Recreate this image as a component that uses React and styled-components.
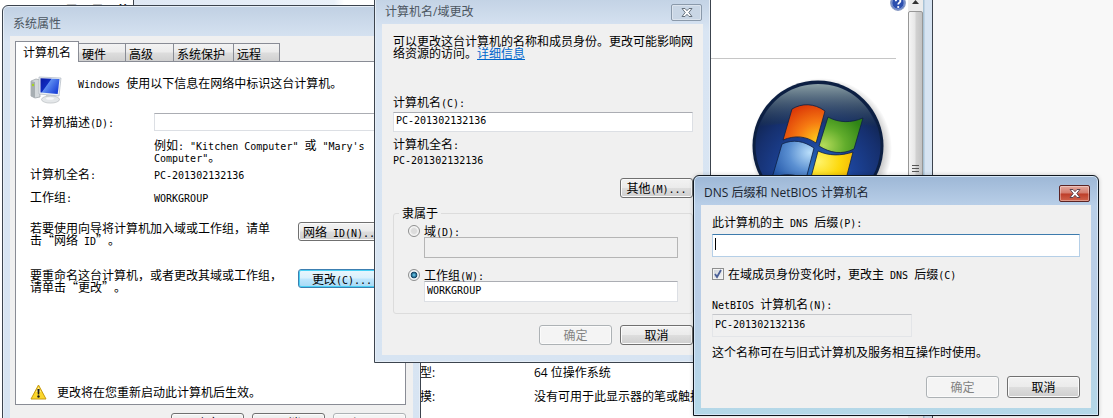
import React from "react";
import styled, { createGlobalStyle, css } from "styled-components";

const Global = createGlobalStyle`
  *{ box-sizing: border-box; }
  body{
    margin: 0;
    background: #f8f8f8;
  }
`;

const Desktop = styled.main`
  position: relative;
  min-height: 100vh;
  overflow: hidden;
  font: 12px/12px "Noto Sans CJK SC", sans-serif;
  text-spacing-trim: space-all;
  color: #000;
`;

const Latin = styled.span`
  font-family: "DejaVu Sans Mono", "Noto Sans CJK SC", monospace;
  font-size: 10px;
  line-height: 0;
  white-space: pre-wrap;
`;

/* latin runs take half of a chinese character's width */
function Song({ children }) {
    return children.split(/([\x20-\x7e]+)/).map((part, i) => (
        i % 2 ? <Latin key={i}>{part}</Latin> : part
    ));
}

const Window = styled.section`
  position: absolute;
  left: ${(p) => p.$x}px;
  top: ${(p) => p.$y}px;
  width: ${(p) => p.$w}px;
  padding: 0 7px 7px;
  border: 1px solid #3c444e;
  border-radius: 6px 6px 0 0;
  background: linear-gradient(#c0d0e3, #d9e5f3 36px, #d7e4f2);
  box-shadow: inset 0 0 0 1px #e6eef7;
  ${(p) => p.$active && css`
    border-color: #10171f;
    background: linear-gradient(#9db7d6, #b9cfe8 30px, #b9cde6 55%, #b4d8e8);
    box-shadow: inset 0 0 0 1px #d5e6f6, 0 0 4px rgba(0, 0, 0, 0.2);
  `}
`;

const TitleBar = styled.header`
  display: flex;
  align-items: center;
  justify-content: space-between;
  height: ${(p) => p.$h}px;
  padding: 5px 1px 0 3px;
`;

const Title = styled.h1`
  margin: 0;
  font: 12px/16px "Open Sans", "Noto Sans CJK SC", sans-serif;
  color: ${(p) => (p.$active ? "#1a2430" : "#4c5661")};
`;

const Close = styled.button`
  display: flex;
  align-items: center;
  justify-content: center;
  width: 31px;
  height: 17px;
  padding: 0;
  border: 1px solid ${(p) => (p.$active ? "#5b2424" : "#8a99aa")};
  border-radius: 2px;
  background: ${(p) => (p.$active ? "linear-gradient(#e3a79c, #d37a6b 48%, #bd3d28 52%, #d0634c)" : "#c9d6e5")};
  box-shadow: inset 0 0 0 1px rgba(255, 255, 255, 0.35);
`;

const Client = styled.div`
  display: flex;
  flex-direction: column;
  padding: ${(p) => p.$pad};
  background: #f0f0f0;
`;

const Line = styled.p`
  margin: ${(p) => p.$top || 0}px 0 0;
  line-height: 12px;
`;

const Label = styled.label`
  display: block;
  margin-top: ${(p) => p.$top || 0}px;
  line-height: 12px;
`;

const Field = styled.input`
  display: block;
  width: ${(p) => p.$w || "100%"};
  height: ${(p) => p.$h || 20}px;
  margin-top: 4px;
  padding: 0 2px 3px;
  border: 1px solid #dcdfe4;
  border-top-color: #abadb3;
  border-radius: 0;
  background: #fff;
  color: #000;
  font: 10px/12px "DejaVu Sans Mono", monospace;
  outline: none;
  &:disabled, &:read-only{
    border-color: #b5b5b5;
    background: #f0f0f0;
  }
  &:read-only:not(:disabled){
    border-color: #c4c6ca #e3e5e8 #e3e5e8;
  }
`;

const FocusField = styled.div`
  display: flex;
  align-items: flex-start;
  height: 23px;
  margin-top: 6px;
  padding: 3px 2px;
  border: 1px solid #b5cfe7;
  border-top-color: #3d7bad;
  background: #fff;
  input{
    flex: 1;
    order: 1;
    min-width: 0;
    height: 13px;
    padding: 0;
    border: 0;
    outline: none;
    background: transparent;
    font: 10px/12px "DejaVu Sans Mono", monospace;
  }
`;

const Caret = styled.span`
  width: 1px;
  height: 12px;
  background: #000;
`;

const Button = styled.button`
  width: ${(p) => p.$w || 73}px;
  height: ${(p) => p.$h || 20}px;
  padding: 0;
  border: 1px solid #707070;
  border-radius: 3px;
  background: linear-gradient(#f2f2f2, #ebebeb 48%, #dddddd 52%, #cfcfcf);
  box-shadow: inset 0 0 0 1px #fbfbfb;
  color: #000;
  font: 12px/12px "Noto Sans CJK SC", sans-serif;
  white-space: nowrap;
  ${(p) => p.$hot && css`
    border-color: #3c7fb1;
    background: linear-gradient(#e9f6fd, #d9f0fc 48%, #bee6fd 52%, #a7d9f5);
    box-shadow: inset 0 0 0 1px #48d0f4;
  `}
  &:disabled{
    border-color: #adb2b5;
    background: #f4f4f4;
    color: #838383;
  }
`;

const Buttons = styled.div`
  display: flex;
  justify-content: flex-end;
  gap: 8px;
  margin-top: ${(p) => p.$top}px;
`;

const Tabs = styled.nav`
  display: flex;
  align-items: flex-end;
  height: 20px;
`;

const Tab = styled.button`
  height: 18px;
  padding: 2px 3px 0;
  width: ${(p) => p.$w}px;
  border: 1px solid #898c95;
  border-width: 1px 1px 0 0;
  background: linear-gradient(#f3f3f3, #ebebeb 48%, #dddddd 52%, #d0d0d0);
  color: #000;
  font: 12px/12px "Noto Sans CJK SC", sans-serif;
  text-align: left;
  white-space: nowrap;
  &[aria-selected="true"]{
    height: 21px;
    margin-bottom: -1px;
    padding: 0 7px;
    border-left-width: 1px;
    background: #fff;
    z-index: 1;
  }
`;

const Panel = styled.div`
  display: flex;
  flex-direction: column;
  height: 344px;
  padding: 14px 14px 4px;
  border: 1px solid #898c95;
  background: #fff;
`;

const Intro = styled.div`
  display: flex;
  gap: 16px;
  p{ margin: 1px 0 0; }
`;

const Facts = styled.div`
  display: grid;
  grid-template-columns: 124px 1fr;
  grid-template-rows: 18px 37px 23px 12px;
  align-items: start;
  margin-top: 9px;
  input{ margin: 0; }
  label{ margin-top: 3px; }
  p{ margin: 0; }
`;

const Hint = styled.div`
  width: 220px;
  padding-top: 8px;
`;

const Action = styled.div`
  display: flex;
  justify-content: space-between;
  align-items: flex-start;
  height: 24px;
  margin-top: ${(p) => p.$top}px;
  padding-right: 5px;
`;

const Notice = styled.div`
  display: flex;
  align-items: center;
  gap: 10px;
  margin-top: auto;
`;

const Link = styled.a`
  color: #0066cc;
  text-decoration: underline;
`;

const Group = styled.fieldset`
  min-width: 0;
  margin: 9px 0 0;
  padding: 5px 14px 11px;
  border: 1px solid #dcdcdc;
  border-radius: 3px;
  legend{
    padding: 0 3px;
    margin-left: -9px;
    line-height: 12px;
  }
  > input{ margin: 0 0 0 16px; }
`;

const Choice = styled.div`
  display: flex;
  align-items: center;
  gap: 4px;
  height: 13px;
  margin-top: ${(p) => p.$top || 0}px;
`;

const Radio = styled.input`
  appearance: none;
  width: 12px;
  height: 12px;
  margin: 0;
  border: 1px solid #8e8f8f;
  border-radius: 50%;
  background: radial-gradient(#dcdcdc 35%, #f6f6f6 60%);
  &:checked{
    background: radial-gradient(#56b4d8 10%, #124364 42%, #eef2f4 52%);
  }
`;

const Check = styled.span`
  display: grid;
  width: 12px;
  height: 12px;
  input, svg{
    grid-area: 1 / 1;
    width: 12px;
    height: 12px;
    margin: 0;
    pointer-events: none;
  }
  input{
    appearance: none;
    pointer-events: auto;
    border: 1px solid #8e8f8f;
    background: linear-gradient(135deg, #cdd2d8, #f6f6f6);
    box-shadow: inset 0 0 0 1px #f4f4f4;
  }
`;

const SystemWindow = styled.section`
  position: absolute;
  left: 133px;
  top: 0;
  bottom: 0;
  width: 800px;
  display: flex;
  border: 1px solid #3c444e;
  border-width: 0 1px;
  background: #fff;
`;

const SystemPage = styled.div`
  display: flex;
  flex: 1;
  flex-direction: column;
  align-items: flex-end;
  background: linear-gradient(90deg, #dfe8f4, #eaf1f9 200px, #fff 210px);
`;

const Help = styled.div`
  height: 58px;
  padding-right: 2px;
  svg{ display: block; margin-top: -5px; }
`;

const Rule = styled.hr`
  width: 100%;
  margin: 0;
  padding: 0;
  border: 0;
  border-top: 1px solid #c6c6c6;
  margin-right: 12px;
`;

const Orb = styled.div`
  height: 308px;
  margin: 16px 14px 0 0;
`;

const Specs = styled.dl`
  display: grid;
  grid-template-columns: 150px 1fr;
  align-self: stretch;
  row-gap: 8px;
  margin: -18px 0 0 250px;
  font: 12px/16px "Open Sans", "Noto Sans CJK SC", sans-serif;
  dt, dd{ margin: 0; white-space: nowrap; }
`;

const Scroll = styled.div`
  display: flex;
  flex-direction: column;
  width: 15px;
  background: #ececec;
  svg{ display: block; }
`;

const Thumb = styled.div`
  display: flex;
  align-items: center;
  justify-content: center;
  height: 316px;
  border: 1px solid #979797;
  border-radius: 2px;
  background: linear-gradient(90deg, #f5f5f5, #e6e6e6 48%, #d2d2d2 52%, #c3c3c3);
`;

const Frame = styled.div`
  width: 9px;
  background: linear-gradient(90deg, #a9c3d6 1px, #d7e4f2 2px);
`;

const Leftover = styled.div`
  position: absolute;
  left: 0;
  top: 0;
  width: 134px;
  height: 100%;
  padding: 2px 0 0 65px;
  border-right: 1px solid #3c444e;
  background: #fff;
  font: bold 13px/16px "Noto Sans CJK SC", sans-serif;
  white-space: nowrap;
`;

function CloseIcon({ active }) {
    return (
        <svg width="12" height="9" viewBox="0 0 12 9" aria-hidden="true">
            <path d="M1 .5h3l2 2.200L8 .5h3L7.800 4.500 11 8.500H8L6 6.300 4 8.500H1l3.200-4z" fill="#fff" stroke={active ? "#5c4550" : "#66717e"} strokeWidth="1" />
        </svg>
    );
}

function ComputerIcon() {
    return (
        <svg width="32" height="28" viewBox="0 0 32 28" aria-hidden="true">
            <defs>
                <linearGradient id="screen" x1="0" y1="0" x2="1" y2=".6">
                    <stop offset="0" stopColor="#0a1aa0" />
                    <stop offset=".42" stopColor="#0f2cc0" />
                    <stop offset=".46" stopColor="#5d8cf0" />
                    <stop offset="1" stopColor="#1d43d8" />
                </linearGradient>
            </defs>
            <path d="M1 5l5-2 4 1v17l-5 1-4-2z" fill="#d3d8db" stroke="#989ea3" strokeWidth=".7" />
            <path d="M1 5l4 1v16l-4-2z" fill="#a7aeb2" />
            <circle cx="3" cy="9" r="1.200" fill="#a6d321" />
            <path d="M9 1l22 1-2 18-20-2z" fill="#eef1f4" stroke="#a3adb8" strokeWidth=".6" />
            <path d="M10.500 2.200l19 .9-1.800 15-17.200-1.500z" fill="url(#screen)" />
            <path d="M16 19l6 1 1 3h-6z" fill="#c9cfd3" />
            <ellipse cx="20.500" cy="23.500" rx="9" ry="3.600" fill="#e4e7e9" stroke="#b0b5b9" strokeWidth=".6" />
            <ellipse cx="20" cy="22.500" rx="4" ry="1.300" fill="#f8f9fa" />
        </svg>
    );
}

function WarningIcon() {
    return (
        <svg width="17" height="16" viewBox="0 0 17 16" aria-hidden="true">
            <path d="M8.500 1L16 15H1z" fill="#fbd62c" stroke="#c79a10" strokeLinejoin="round" />
            <path d="M8.500 3L11 8H6z" fill="#fff09a" />
            <path d="M7.400 5h2.200l-.4 5.500H7.800z" fill="#1b1b1b" />
            <circle cx="8.500" cy="12.500" r="1.200" fill="#1b1b1b" />
        </svg>
    );
}

function HelpIcon() {
    return (
        <svg width="16" height="16" viewBox="0 0 16 16" role="img" aria-label="help">
            <circle cx="8" cy="8" r="7.300" fill="#2c4fae" stroke="#8b9cc4" strokeWidth="1.200" />
            <circle cx="8" cy="8" r="6.200" fill="none" stroke="#c8d6f4" strokeWidth=".6" />
            <path d="M5.800 6.200c0-3 4.600-2.900 4.600-.3 0 1.700-2.200 1.800-2.200 3.600" fill="none" stroke="#fff" strokeWidth="1.800" />
            <circle cx="8.200" cy="12" r="1.100" fill="#fff" />
        </svg>
    );
}

function WindowsOrb() {
    return (
        <svg width="144" height="142" viewBox="0 0 144 142" role="img" aria-label="Windows">
            <defs>
                <radialGradient id="ball" cx=".5" cy=".75" r=".7">
                    <stop offset="0" stopColor="#2f7fd0" />
                    <stop offset=".4" stopColor="#1c4398" />
                    <stop offset=".75" stopColor="#16306f" />
                    <stop offset="1" stopColor="#0f2147" />
                </radialGradient>
                <linearGradient id="gloss" x1="0" y1="0" x2="0" y2="1">
                    <stop offset="0" stopColor="#8ba0a6" />
                    <stop offset=".9" stopColor="#1f3656" stopOpacity=".5" />
                    <stop offset="1" stopColor="#1f3656" stopOpacity="0" />
                </linearGradient>
                <radialGradient id="red" cx=".85" cy=".95" r="1">
                    <stop offset="0" stopColor="#ffd21a" />
                    <stop offset=".5" stopColor="#f67a12" />
                    <stop offset="1" stopColor="#dc3a08" />
                </radialGradient>
                <radialGradient id="green" cx=".1" cy=".8" r="1">
                    <stop offset="0" stopColor="#b5dc5a" />
                    <stop offset=".5" stopColor="#62ad2c" />
                    <stop offset="1" stopColor="#2f8416" />
                </radialGradient>
                <radialGradient id="blue" cx=".9" cy=".3" r="1">
                    <stop offset="0" stopColor="#b9defa" />
                    <stop offset=".5" stopColor="#5b90d2" />
                    <stop offset="1" stopColor="#2457a8" />
                </radialGradient>
                <radialGradient id="yellow" cx=".2" cy=".3" r="1">
                    <stop offset="0" stopColor="#fff36a" />
                    <stop offset=".5" stopColor="#fcd80c" />
                    <stop offset="1" stopColor="#eea806" />
                </radialGradient>
                <radialGradient id="shade">
                    <stop offset=".88" stopColor="#000" stopOpacity=".2" />
                    <stop offset="1" stopColor="#000" stopOpacity="0" />
                </radialGradient>
            </defs>
            <circle cx="71" cy="74" r="71" fill="url(#shade)" />
            <circle cx="68" cy="71" r="65.500" fill="#0c1f42" />
            <circle cx="68" cy="71" r="62.500" fill="url(#ball)" />
            <path d="M9 52C18 26 40 9 68 9s50 17 59 43C100 46 38 46 9 52z" fill="url(#gloss)" />
            <path d="M42 34c10-6 22-6 33 2l-9 32c-10-7-21-8-33-3z" fill="url(#red)" stroke="#0c1f42" strokeWidth=".8" />
            <path d="M78 42c11 6 23 6 35 1l-9 31c-12 6-24 4-35-3z" fill="url(#green)" stroke="#0c1f42" strokeWidth=".8" />
            <path d="M32 69c11-5 22-3 32 4l-8 31c-11-5-22-6-34-1z" fill="url(#blue)" stroke="#0c1f42" strokeWidth=".8" />
            <path d="M68 76c11 5 23 5 35 1l-8 31c-12 5-24 4-35-2z" fill="url(#yellow)" stroke="#0c1f42" strokeWidth=".8" />
        </svg>
    );
}

function SystemBackground() {
    return (
        <SystemWindow>
            <SystemPage>
                <Help><HelpIcon /></Help>
                <Rule />
                <Orb><WindowsOrb /></Orb>
                <Specs>
                    <dt>系统类型:</dt>
                    <dd>64 位操作系统</dd>
                    <dt>笔和触摸:</dt>
                    <dd>没有可用于此显示器的笔或触控输入</dd>
                </Specs>
            </SystemPage>
            <Scroll>
                <svg width="15" height="11" viewBox="0 0 15 11"><path d="M4 4l3.500-4L11 4z" fill="#333" /></svg>
                <Thumb>
                    <svg width="7" height="8" viewBox="0 0 7 8"><path d="M0 .5h7M0 3.500h7M0 6.500h7" stroke="#555" /></svg>
                </Thumb>
            </Scroll>
            <Frame />
        </SystemWindow>
    );
}

function PropertiesWindow() {
    return (
        <Window $x={2} $y={5} $w={419}>
            <TitleBar $h={30}><Title>系统属性</Title></TitleBar>
            <Client $pad="5px 7px 9px 5px">
                <Tabs role="tablist">
                    <Tab role="tab" aria-selected="true" $w={64}>计算机名</Tab>
                    <Tab role="tab" $w={47}>硬件</Tab>
                    <Tab role="tab" $w={48}>高级</Tab>
                    <Tab role="tab" $w={60}>系统保护</Tab>
                    <Tab role="tab" $w={46}>远程</Tab>
                </Tabs>
                <Panel>
                    <Intro>
                        <ComputerIcon />
                        <Line><Song>Windows 使用以下信息在网络中标识这台计算机。</Song></Line>
                    </Intro>
                    <Facts>
                        <Label htmlFor="description"><Song>计算机描述(D):</Song></Label>
                        <Field id="description" type="text" $h={18} />
                        <span />
                        <Hint><Song>例如: "Kitchen Computer" 或 "Mary's Computer"。</Song></Hint>
                        <p><Song>计算机全名:</Song></p>
                        <p><Song>PC-201302132136</Song></p>
                        <p><Song>工作组:</Song></p>
                        <p><Song>WORKGROUP</Song></p>
                    </Facts>
                    <Action $top={19}>
                        <Line><Song>若要使用向导将计算机加入域或工作组，请单</Song><br /><Song>击“网络 ID”。</Song></Line>
                        <Button $w={88} $h={19}><Song>网络 ID(N)...</Song></Button>
                    </Action>
                    <Action $top={23}>
                        <Line>要重命名这台计算机，或者更改其域或工作组，<br />请单击“更改”。</Line>
                        <Button $w={88} $h={19} $hot><Song>更改(C)...</Song></Button>
                    </Action>
                    <Notice><WarningIcon />更改将在您重新启动此计算机后生效。</Notice>
                </Panel>
                <Buttons $top={8}>
                    <Button>确定</Button>
                    <Button>取消</Button>
                    <Button disabled><Song>应用(A)</Song></Button>
                </Buttons>
            </Client>
        </Window>
    );
}

function DomainWindow() {
    return (
        <Window $x={374} $y={-6} $w={337}>
            <TitleBar $h={29}>
                <Title>计算机名/域更改</Title>
                <Close aria-label="close"><CloseIcon /></Close>
            </TitleBar>
            <Client $pad="11px 10px 10px 11px">
                <Line>可以更改这台计算机的名称和成员身份。更改可能影响网<br />络资源的访问。<Link href="#details">详细信息</Link></Line>
                <Label $top={37} htmlFor="name"><Song>计算机名(C):</Song></Label>
                <Field id="name" type="text" defaultValue="PC-201302132136" />
                <Line $top={6}><Song>计算机全名:</Song></Line>
                <Line $top={3}><Song>PC-201302132136</Song></Line>
                <Buttons $top={13}><Button><Song>其他(M)...</Song></Button></Buttons>
                <Group>
                    <legend>隶属于</legend>
                    <Choice>
                        <Radio type="radio" name="member" id="domain" disabled />
                        <Label htmlFor="domain"><Song>域(D):</Song></Label>
                    </Choice>
                    <Field type="text" aria-label="域" disabled $w="254px" $h={21} />
                    <Choice $top={10}>
                        <Radio type="radio" name="member" id="workgroup" defaultChecked />
                        <Label htmlFor="workgroup"><Song>工作组(W):</Song></Label>
                    </Choice>
                    <Field type="text" aria-label="工作组" defaultValue="WORKGROUP" $w="254px" $h={21} />
                </Group>
                <Buttons $top={11}>
                    <Button disabled>确定</Button>
                    <Button>取消</Button>
                </Buttons>
            </Client>
        </Window>
    );
}

function DnsWindow() {
    return (
        <Window $x={693} $y={175} $w={406} $active>
            <TitleBar $h={29}>
                <Title $active>DNS 后缀和 NetBIOS 计算机名</Title>
                <Close aria-label="close" $active><CloseIcon active /></Close>
            </TitleBar>
            <Client $pad="11px 11px 10px 11px">
                <Label htmlFor="suffix"><Song>此计算机的主 DNS 后缀(P):</Song></Label>
                <FocusField>
                    <Caret />
                    <input id="suffix" type="text" />
                </FocusField>
                <Choice $top={10}>
                    <Check>
                        <input type="checkbox" id="change" defaultChecked />
                        <svg viewBox="0 0 12 12"><path d="M3 6l2 3 4-7" fill="none" stroke="#4a5f97" strokeWidth="1.800" /></svg>
                    </Check>
                    <Label htmlFor="change"><Song>在域成员身份变化时，更改主 DNS 后缀(C)</Song></Label>
                </Choice>
                <Label $top={18} htmlFor="netbios"><Song>NetBIOS 计算机名(N):</Song></Label>
                <Field id="netbios" type="text" readOnly value="PC-201302132136" $w="200px" $h={23} />
                <Line $top={9}>这个名称可在与旧式计算机及服务相互操作时使用。</Line>
                <Buttons $top={18}>
                    <Button disabled $h={22}>确定</Button>
                    <Button $h={22}>取消</Button>
                </Buttons>
            </Client>
        </Window>
    );
}

export default function App() {
    return (
        <Desktop lang="zh-CN">
            <Global />
            <SystemBackground />
            <Leftover>界面显示的</Leftover>
            <PropertiesWindow />
            <DomainWindow />
            <DnsWindow />
        </Desktop>
    );
}
